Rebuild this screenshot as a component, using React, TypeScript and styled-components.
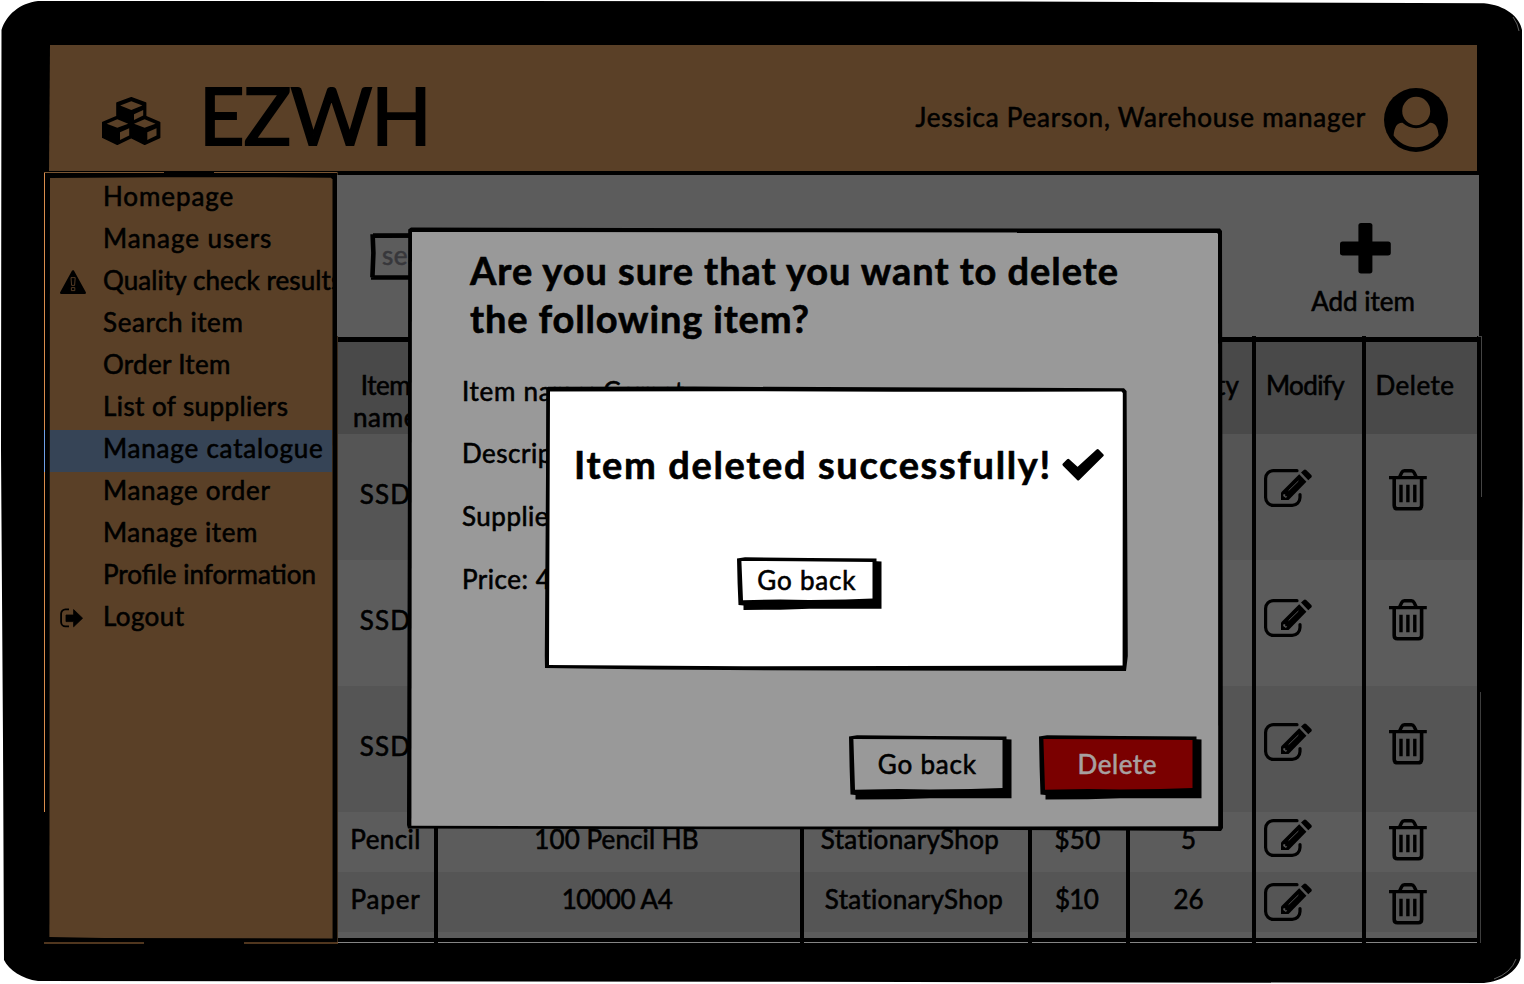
import React from "react";
import styled, { createGlobalStyle } from "styled-components";

const Global = createGlobalStyle`
  * { box-sizing: border-box; }
  body {
    margin: 0;
    background: #fff;
    overflow: hidden;
    font: 26px/32px Lato, "Open Sans", sans-serif;
    color: #000;
  }
  ul { list-style: none; margin: 0; padding: 0; }
  h1, h2, p { margin: 0; font-weight: 400; }
`;

const BROWN = "#5a4027";
const GREY = "#5c5c5c";
const GREY_ALT = "#555555";
const GREY_HEAD = "#494949";
const SHEET = "#999999";

const Text = styled.span<{ $ls?: number }>`
  white-space: nowrap;
  letter-spacing: ${(p) => p.$ls ?? 0.5}px;
  -webkit-text-stroke: 0.6px currentColor;
`;

const Device = styled.div`
  position: relative;
  width: 1524px;
  height: 984px;
  padding: 45px 43px 41px 44px;
`;

const Ink = styled.svg`
  position: absolute;
  inset: 0;
  width: 100%;
  height: 100%;
  pointer-events: none;
  overflow: visible;
`;

const Header = styled.header`
  position: relative;
  display: flex;
  height: 126px;
  margin: 0 4px 0 6px;
  padding-left: 52px;
  background: ${BROWN};
`;

const LogoSlot = styled.div`
  width: 59px;
  padding-top: 52px;
  line-height: 0;
`;

const Brand = styled.h1`
  margin-left: 38px;
  padding-top: 22px;
  font-size: 79px;
  line-height: 96px;
  letter-spacing: -0.9px;
  -webkit-text-stroke: 2px #000;
`;

const Account = styled.div`
  display: flex;
  margin-left: auto;
  padding-right: 29px;
`;

const AccountName = styled.div`
  padding: 56px 18px 0 0;
`;

const AvatarSlot = styled.div`
  padding-top: 43px;
  line-height: 0;
`;

const Body = styled.div`
  position: relative;
  display: flex;
  height: 773px;
  margin-top: 1px;
`;

const Sidebar = styled.nav`
  position: relative;
  width: 293px;
  padding: 6px 5px 0 6px;
`;

const Menu = styled.ul`
  position: relative;
`;

const MenuItem = styled.li<{ $active?: boolean }>`
  display: flex;
  height: 42px;
  line-height: 37px;
  background: ${(p) => (p.$active ? "#364456" : "transparent")};
`;

const MenuIcon = styled.div`
  flex: none;
  width: 53px;
  padding-left: 10px;
  line-height: 0;
`;

const MenuLabel = styled.div`
  flex: none;
`;

const Main = styled.main`
  width: 1142px;
  padding-top: 2.5px;
`;

const Toolbar = styled.div`
  position: relative;
  display: flex;
  justify-content: space-between;
  height: 161.5px;
  padding: 0 64px 0 33px;
  background: ${GREY};
`;

const SearchField = styled.div`
  position: relative;
  width: 420px;
  height: 47px;
  margin-top: 58px;
  padding: 6px 0 0 12px;
  color: #37373b;
`;

const AddItem = styled.div`
  display: flex;
  flex-direction: column;
  align-items: center;
  width: 104px;
  padding-top: 48px;
  line-height: 0;
`;

const PlusSlot = styled.div`
  padding-left: 4px;
`;

const AddLabel = styled.div`
  margin-top: 11px;
  line-height: 32px;
`;

const Row = styled.div<{ $h: number; $bg: string }>`
  display: grid;
  grid-template-columns: 101px 366px 228px 98px 126px 110px 111px;
  width: 1140px;
  height: ${(p) => p.$h}px;
  background: ${(p) => p.$bg};
`;

const Cell = styled.div<{ $pad?: number }>`
  display: flex;
  align-items: center;
  justify-content: center;
  padding: 0 ${(p) => p.$pad ?? 0}px 6px 0;
  border-right: 4px solid #000;
  text-align: center;
  &:last-child { border-right: 0; }
`;

const HeadCell = styled(Cell)`
  align-items: flex-start;
  padding-top: 27px;
  padding-bottom: 0;
`;

const HeadStack = styled.div`
  display: flex;
  flex-direction: column;
  align-items: center;
`;

const RuleCell = styled(Cell)`
  padding: 0;
`;

const IconCell = styled(Cell)<{ $top: number; $left: number }>`
  align-items: flex-start;
  justify-content: flex-start;
  padding: ${(p) => p.$top}px 0 0 ${(p) => p.$left}px;
  line-height: 0;
`;

const Sheet = styled.section`
  position: absolute;
  left: 407px;
  top: 227px;
  width: 817px;
  height: 604px;
  padding: 19px 23px 0 55px;
`;

const SheetTitle = styled.h2`
  position: relative;
  padding-left: 8px;
  font-size: 38px;
  line-height: 48px;
  font-weight: 700;
  -webkit-text-stroke: 0.9px #000;
`;

const Details = styled.div`
  position: relative;
  display: flex;
  flex-direction: column;
  gap: 30.7px;
  margin-top: 32.5px;
`;

const Actions = styled.div`
  display: flex;
  justify-content: flex-end;
  gap: 27.5px;
  margin-top: 140.5px;
`;

const ButtonBox = styled.button<{ $w: number; $h: number; $light?: boolean }>`
  position: relative;
  display: flex;
  align-items: flex-start;
  justify-content: center;
  width: ${(p) => p.$w}px;
  height: ${(p) => p.$h}px;
  padding: ${(p) => p.$h / 2 - 19.5}px 5px 0 0;
  border: 0;
  background: none;
  color: ${(p) => (p.$light ? "#a8a0a0" : "#000")};
  font: inherit;
`;

const ButtonText = styled(Text)`
  position: relative;
`;

const Notice = styled.section`
  position: absolute;
  left: 544px;
  top: 386px;
  width: 584px;
  height: 286px;
`;

const NoticeTitle = styled.div`
  position: relative;
  display: flex;
  padding: 54px 0 0 30px;
  font-size: 38px;
  line-height: 48px;
  font-weight: 700;
`;

const NoticeAction = styled.div`
  display: flex;
  padding: 69px 0 0 193px;
`;

const CheckSlot = styled.div`
  padding: 9px 0 0 10px;
  line-height: 0;
`;

const Bezel = () => (
  <Ink viewBox="0 0 1524 984">
    <path d="M38 1 L500 1 L1000 1.5 L1484 3.2 C1505 5 1520 17 1522 30 L1522.6 500 L1520.6 958 C1517 972 1502 981 1484 983 L800 981.8 L38 981 C22 979 9 970 4 960 L3 740 L1 450 L1.5 30 C6 15 20 3 38 1Z" />
    <path d="M1513 17 Q1518 24 1519 31 M1516 959 Q1511 973 1494 979" stroke="#777" strokeWidth=".8" fill="none" />
    <path d="M50 45 L49 171 H50Z" fill={BROWN} />
  </Ink>
);

const SidebarFrame = () => (
  <Ink viewBox="0 0 293 773">
    <path d="M0 0 H294 V771.5 H0Z" fill="#000" />
    <path d="M.5 640 V0" stroke="#d98c4c" strokeWidth="1" />
    <path d="M.5 300 V258" stroke="#6f9fe6" strokeWidth="1" />
    <path d="M0 .5 H120 M170 .5 H294" stroke="#7a5532" strokeWidth="1" />
    <path d="M293.5 0 V771" stroke="#3a2b1c" strokeWidth="1" />
    <path d="M0 771 H100" stroke="#a06c3d" strokeWidth="1" />
    <path d="M200 771 H294" stroke="#a06c3d" strokeWidth="1" />
    <path d="M6 6 L120 5.2 L230 5.2 L287 5.8 L288.5 7.5 L288.6 766.5 L60 766 L5.4 765Z" fill={BROWN} />
  </Ink>
);

const SheetFrame = () => (
  <Ink viewBox="0 0 817 604">
    <path d="M4 .6 L400 1.2 L813 1.6 L815 4 L816 601 L814 604 L500 602.6 L1 601.5 L0 598 L.8 300 L1.2 2.5Z" />
    <path d="M5 5 L400 5.2 L809.5 5.6 L811 7 L811.2 599.3 L300 599.6 L4.4 598.8Z" fill={SHEET} />
  </Ink>
);

const NoticeFrame = () => (
  <Ink viewBox="0 0 584 286">
    <path d="M4 .8 L150 .6 L400 1.6 L580 2.2 L582.6 5 L583.8 270 L582 285 L300 284.6 L110 283.6 L1 282 L.8 270 L2 90 L2.2 3Z" />
    <path d="M6 5.4 L200 5.2 L350 5.8 L577.5 5.6 L578.8 7 L578.6 279.6 L200 280.2 L5 279Z" fill="#fff" />
  </Ink>
);

const SketchButton = ({ w, h, fill, light, ls, children }: { w: number; h: number; fill: string; light?: boolean; ls: number; children: string }) => (
  <ButtonBox $w={w} $h={h} $light={light}>
    <Ink viewBox={`0 0 ${w} ${h}`}>
      <path
        d={`M0 1.6 L8 .2 L${w * 0.5} 1 L${w - 5} 1.4 V4.2 L${w} 4.6 V${h - 1.3} L${w * 0.5} ${h - 1.2} L${w * 0.3} ${h - 0.3} L6.5 ${h} V${h - 4.5} L1.5 ${h - 5} L.6 ${h * 0.5}Z`}
      />
      <path
        d={`M4.4 4 L${w * 0.4} 4.2 L${w - 9} 5 L${w - 9} ${h - 11.5} L${w * 0.75} ${h - 10.6} L${w * 0.5} ${h - 10} L${w * 0.3} ${h - 10.6} L6 ${h - 9.8}Z`}
        fill={fill}
      />
    </Ink>
    <ButtonText $ls={ls}>{children}</ButtonText>
  </ButtonBox>
);

const CubesIcon = () => (
  <svg width="59" height="49" viewBox="102 97 59 49">
    <path
      d="M131.3 97.8 L145.6 103 V116.6 L159.6 122.6 V137.4 L144.7 144.3 L131.2 137.6 L117.3 144.3 L102.8 137.4 V122.6 L117 116.6 V103Z"
      stroke="#000"
      strokeWidth="1.6"
      strokeLinejoin="round"
    />
    <g fill={BROWN}>
      <path d="M131.3 101.3 L142.4 105.4 L131.3 110 L120.2 105.6Z" />
      <path d="M134 114.3 L143.2 110 V115.5 L134 120Z" />
      {[0, 27.3].map((x) => (
        <g key={x} transform={`translate(${x} 0)`}>
          <path d="M117.3 119.3 L128.2 123.7 L117.3 127.8 L106.7 123.7Z" />
          <path d="M120 132.2 L129.2 128.2 V135.4 L120 140Z" />
        </g>
      ))}
    </g>
  </svg>
);

const AvatarIcon = () => (
  <svg width="64" height="64" viewBox="0 0 64 64">
    <circle cx="32" cy="32" r="32" />
    <ellipse cx="32.2" cy="23" rx="14" ry="14.2" fill={BROWN} />
    <path d="M9.6 47.5 C10.4 40 12.6 34.6 18.4 34.8 C26 42 38 42 46 34.8 C51.6 34.6 54 40 54.6 47.5 C49 55 41 59.2 32 59.2 C23 59.2 15 55 9.6 47.5Z" fill={BROWN} />
  </svg>
);

const WarningIcon = () => (
  <svg width="27" height="42" viewBox="0 0 27 42">
    <path d="M13 9.4 L24.8 30.8 H1.2Z" stroke="#000" strokeWidth="2.4" strokeLinejoin="round" />
    <path d="M11 15.6 H15.2 L14.6 23.4 H11.6Z M11.4 25.6 H14.8 V28.6 H11.4Z" fill="none" stroke={BROWN} strokeWidth=".9" />
  </svg>
);

const LogoutIcon = () => (
  <svg width="24" height="42" viewBox="0 0 24 42">
    <path d="M9 12 H5.5 A4.4 4.4 0 0 0 1.1 16.4 V24.6 A4.4 4.4 0 0 0 5.5 29 H9" fill="none" stroke="#000" strokeWidth="1.8" transform="translate(0 -.6)" />
    <path d="M6 17 H13.6 V11.6 L22.6 20.2 L13.6 28.8 V23.6 H6Z" stroke="#000" strokeWidth=".8" strokeLinejoin="round" />
  </svg>
);

const PlusIcon = () => (
  <svg width="51" height="51" viewBox="0 0 51 51">
    <rect x="18.4" width="14" height="50.4" rx="2.6" />
    <rect y="18.4" width="50.8" height="14" rx="2.6" />
  </svg>
);

const EditIcon = ({ bg }: { bg: string }) => (
  <svg width="49" height="39" viewBox="0 0 49 39">
    <path
      d="M33 1.7 H9.4 A7.8 7.8 0 0 0 1.6 9.5 V28.6 A7.8 7.8 0 0 0 9.4 36.4 H28.2 A7.8 7.8 0 0 0 36 28.6 V25.6"
      fill="none"
      stroke="#000"
      strokeWidth="3.2"
      strokeLinecap="round"
    />
    <path d="M17 31 V23.4 L35.2 5.2 L42.4 12.8 L24.6 31Z" />
    <path d="M37 3.6 L39.8 .9 Q41 0 42.2 1 L47.3 5.9 Q48.4 7 47.4 8.2 L44.3 11.3Z" />
    <path d="M24.6 21.6 L34.4 12" stroke={bg} strokeWidth=".9" />
    <path d="M19.4 25.2 H21.2 V27.2 H23.2 L22 29 L19.2 27Z" fill={bg} />
  </svg>
);

const TrashIcon = () => (
  <svg width="38" height="42" viewBox="0 0 38 42">
    <path d="M0 8.6 H37.8" stroke="#000" strokeWidth="3.4" />
    <path d="M10.6 8 L12.6 3.8 Q13.6 1.8 15.4 1.8 H22.4 Q24.2 1.8 25.2 3.8 L27.2 8" fill="none" stroke="#000" strokeWidth="3.4" />
    <path d="M5.2 9 V36.6 Q5.2 39.8 8.4 39.8 H29.4 Q32.6 39.8 32.6 36.6 V9" fill="none" stroke="#000" strokeWidth="3.6" />
    <path d="M12 15.8 V33.2 M18.9 15.8 V33.2 M25.8 15.8 V33.2" stroke="#000" strokeWidth="3.4" />
  </svg>
);

const CheckIcon = () => (
  <svg width="42" height="32" viewBox="0 0 42 32">
    <path d="M2 15.6 L6.2 11.4 L15.6 19.8 L35.6 1.6 L40.2 6.2 L16.2 30Z" stroke="#000" strokeWidth="3" strokeLinejoin="round" />
  </svg>
);

const menu: { label: string; ls: number; icon?: React.ReactNode; active?: boolean }[] = [
  { label: "Homepage", ls: 0.9 },
  { label: "Manage users", ls: 0.95 },
  { label: "Quality check results", ls: 0.1, icon: <WarningIcon /> },
  { label: "Search item", ls: 0.6 },
  { label: "Order Item", ls: 0.3 },
  { label: "List of suppliers", ls: 0.42 },
  { label: "Manage catalogue", ls: 0.8, active: true },
  { label: "Manage order", ls: 0.7 },
  { label: "Manage item", ls: 0.6 },
  { label: "Profile information", ls: 0 },
  { label: "Logout", ls: 0.4, icon: <LogoutIcon /> },
];

type Value = { t: string; ls?: number; pad?: number };
const rows: { h: number; icon: number; cells: Value[] }[] = [
  { h: 126, icon: 35, cells: [{ t: "SSD", ls: 1.1 }, { t: "" }, { t: "" }, { t: "" }, { t: "" }] },
  { h: 126, icon: 39, cells: [{ t: "SSD", ls: 1.1 }, { t: "" }, { t: "" }, { t: "" }, { t: "" }] },
  { h: 126, icon: 37, cells: [{ t: "SSD", ls: 1.1 }, { t: "" }, { t: "" }, { t: "" }, { t: "" }] },
  {
    h: 60,
    icon: 7,
    cells: [{ t: "Pencil", ls: 0.4 }, { t: "100 Pencil HB", ls: 0.1, pad: 5 }, { t: "StationaryShop", ls: 0.32, pad: 12 }, { t: "$50", ls: 0.2, pad: 3 }, { t: "5", ls: 0, pad: 5 }],
  },
  {
    h: 60,
    icon: 11,
    cells: [{ t: "Paper", ls: 0.8 }, { t: "10000 A4", ls: -0.4, pad: 4 }, { t: "StationaryShop", ls: 0.32, pad: 4 }, { t: "$10", ls: -0.8, pad: 5 }, { t: "26", ls: 0, pad: 5 }],
  },
];

const RuleRow = ({ h, bg }: { h: number; bg: string }) => (
  <Row $h={h} $bg={bg}>
    {[0, 1, 2, 3, 4, 5, 6].map((i) => (
      <RuleCell key={i} />
    ))}
  </Row>
);

const TableEdge = () => (
  <Ink viewBox="0 0 1437 773">
    <path d="M1434 164.5 H1437.5 M1437.5 164 V325" stroke="#444" strokeWidth="1" fill="none" />
    <path d="M1436.5 520 V771" stroke="#3d3d3d" strokeWidth="1" />
  </Ink>
);

export default function App() {
  return (
    <Device>
      <Global />
      <Bezel />
      <Header>
        <LogoSlot><CubesIcon /></LogoSlot>
        <Brand>EZWH</Brand>
        <Account>
          <AccountName><Text $ls={0.8}>Jessica Pearson, Warehouse manager</Text></AccountName>
          <AvatarSlot><AvatarIcon /></AvatarSlot>
        </Account>
      </Header>
      <Body>
        <Sidebar>
          <SidebarFrame />
          <Menu>
            {menu.map((m) => (
              <MenuItem key={m.label} $active={m.active}>
                <MenuIcon>{m.icon}</MenuIcon>
                <MenuLabel><Text $ls={m.ls}>{m.label}</Text></MenuLabel>
              </MenuItem>
            ))}
          </Menu>
        </Sidebar>
        <Main>
          <Toolbar>
            <SearchField>
              <Ink viewBox="0 0 420 47">
                <path d="M3 2.6 L420 2 M2.6 1.2 L3.4 20 L2.4 44.4 M1 44.4 L420 44.8" fill="none" stroke="#000" strokeWidth="4.6" />
              </Ink>
              <Text $ls={0.5}>search</Text>
            </SearchField>
            <AddItem>
              <PlusSlot><PlusIcon /></PlusSlot>
              <AddLabel><Text $ls={0}>Add item</Text></AddLabel>
            </AddItem>
          </Toolbar>
          <RuleRow h={1} bg={GREY} />
          <RuleRow h={5} bg="#000" />
          <Row $h={92} $bg={GREY_HEAD}>
            <HeadCell>
              <HeadStack>
                <Text $ls={-0.5}>Item</Text>
                <Text $ls={0.6}>name</Text>
              </HeadStack>
            </HeadCell>
            <HeadCell />
            <HeadCell />
            <HeadCell />
            <HeadCell $pad={6}><Text $ls={0.2}>Quantity</Text></HeadCell>
            <HeadCell $pad={8}><Text $ls={-0.6}>Modify</Text></HeadCell>
            <HeadCell $pad={13}><Text $ls={0.5}>Delete</Text></HeadCell>
          </Row>
          {rows.map((r, i) => {
            const bg = i % 2 ? GREY : GREY_ALT;
            return (
              <Row key={i} $h={r.h} $bg={bg}>
                {r.cells.map((c, j) => (
                  <Cell key={j} $pad={c.pad}>{c.t && <Text $ls={c.ls}>{c.t}</Text>}</Cell>
                ))}
                <IconCell $top={r.icon} $left={8}><EditIcon bg={bg} /></IconCell>
                <IconCell $top={r.icon} $left={23}><TrashIcon /></IconCell>
              </Row>
            );
          })}
          <RuleRow h={6} bg={GREY} />
          <RuleRow h={4} bg="#000" />
          <RuleRow h={1} bg="#858585" />
        </Main>
        <TableEdge />
      </Body>

      <Sheet>
        <SheetFrame />
        <SheetTitle>
          <Text $ls={0.95}>Are you sure that you want to delete</Text>
          <br />
          <Text $ls={0.85}>the following item?</Text>
        </SheetTitle>
        <Details>
          <Text $ls={0.7}>Item name: Carpet</Text>
          <Text $ls={0.5}>Descrip</Text>
          <Text $ls={0.5}>Supplie</Text>
          <Text $ls={0.5}>Price: 4</Text>
        </Details>
        <Actions>
          <SketchButton w={162.5} h={64.5} fill={SHEET} ls={0.8}>Go back</SketchButton>
          <SketchButton w={162.5} h={64.5} fill="#7a0000" light ls={0.55}>Delete</SketchButton>
        </Actions>
      </Sheet>

      <Notice>
        <NoticeFrame />
        <NoticeTitle>
          <Text $ls={1.65}>Item deleted successfully!</Text>
          <CheckSlot><CheckIcon /></CheckSlot>
        </NoticeTitle>
        <NoticeAction>
          <SketchButton w={144.5} h={53} fill="#fff" ls={0.8}>Go back</SketchButton>
        </NoticeAction>
      </Notice>
    </Device>
  );
}
